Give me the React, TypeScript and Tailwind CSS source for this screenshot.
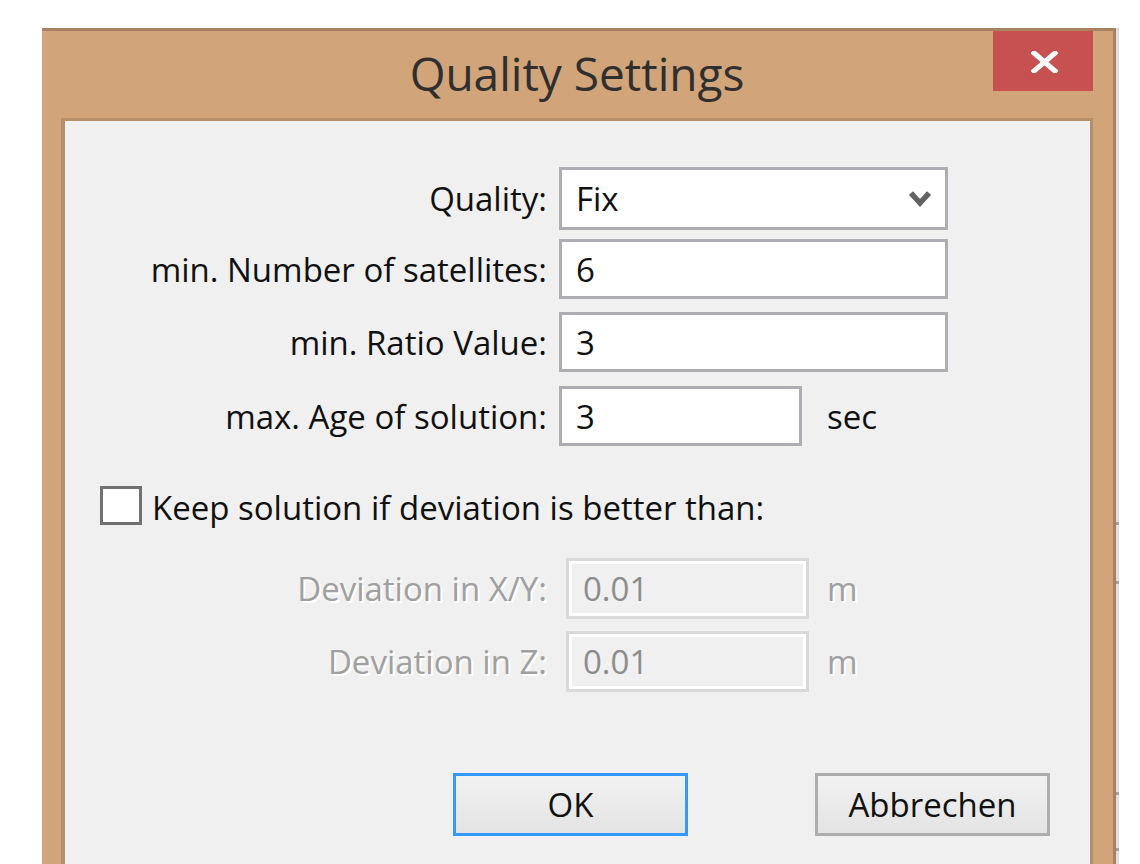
import type { ReactNode } from "react";

function CloseGlyph() {
  return (
    <svg width="27" height="22" viewBox="0 0 27 22" aria-hidden="true">
      <path d="M3 2 L24 20 M24 2 L3 20" stroke="#fff" strokeWidth="5" strokeLinecap="square" />
    </svg>
  );
}

function Chevron() {
  return (
    <svg width="22" height="18" viewBox="0 0 22 18" aria-hidden="true">
      <path d="M2 3 L11 13 L20 3" fill="none" stroke="#626262" strokeWidth="5.5" />
    </svg>
  );
}

function Label({ children, disabled }: { children: ReactNode; disabled?: boolean }) {
  return (
    <span
      className={
        disabled
          ? "w-[482px] shrink-0 text-right text-[#a0a0a0] [text-shadow:2px_2px_0_#fff]"
          : "w-[482px] shrink-0 text-right text-[#111]"
      }
    >
      {children}
    </span>
  );
}

function TextBox({ value, wide }: { value: string; wide?: boolean }) {
  return (
    <input
      readOnly
      value={value}
      className={
        (wide ? "w-[389px] " : "w-[243px] ") +
        "ml-[12px] h-[60px] border-[3px] border-[#adadb3] bg-white px-[14px] text-[#111] outline-none"
      }
    />
  );
}

function DisabledBox({ value }: { value: string }) {
  return (
    <div className="ml-[19px] flex h-[61px] w-[243px] items-center border-[3px] border-[#d9d9d9] bg-[#f0f0f0] px-[14px] text-[#8c8c8c] shadow-[inset_0_0_0_3px_#fff]">
      {value}
    </div>
  );
}

function Button({ children, focused, className }: { children: ReactNode; focused?: boolean; className?: string }) {
  return (
    <button
      className={
        (focused ? "border-[#3399ff] " : "border-[#adadad] ") +
        "flex h-[63px] w-[235px] items-center justify-center border-[3px] bg-linear-to-b from-[#f2f2f2] to-[#e3e3e3] text-[#111] " +
        (className ?? "")
      }
    >
      {children}
    </button>
  );
}

export default function App() {
  return (
    <div className="flex h-[864px] w-[1140px] overflow-hidden bg-white pl-[42px] pt-[28px] font-['Open_Sans',sans-serif] text-[33px] leading-[45px]">
      <div className="relative flex h-[836px] w-[1074px] shrink-0 flex-col border-r-[3px] border-t-[3px] border-[#a98261] bg-[#d1a479] pl-[19px] pr-[20px]">
        <div className="flex h-[87px] shrink-0 items-center justify-center pb-[3px]">
          <h1 className="text-[46px] leading-none text-[#2f2f2f]">Quality Settings</h1>
        </div>
        <button className="absolute right-[20px] top-0 flex h-[60px] w-[100px] items-center justify-center bg-[#c75050] pl-[3px] pt-[2px]">
          <CloseGlyph />
        </button>

        <div className="flex flex-1 flex-col border-l-4 border-r-[3px] border-t-[3px] border-[#b48f6a] bg-[#f0f0f0]">
          <div className="mt-[46px] flex items-center">
            <Label>Quality:</Label>
            <div className="ml-[12px] flex h-[63px] w-[389px] items-center justify-between border-[3px] border-[#adadb3] bg-white px-[14px] text-[#111]">
              <span>Fix</span>
              <Chevron />
            </div>
          </div>
          <div className="mt-[9px] flex items-center">
            <Label>min. Number of satellites:</Label>
            <TextBox value="6" wide />
          </div>
          <div className="mt-[13px] flex items-center">
            <Label>min. Ratio Value:</Label>
            <TextBox value="3" wide />
          </div>
          <div className="mt-[14px] flex items-center">
            <Label>max. Age of solution:</Label>
            <TextBox value="3" />
            <span className="ml-[25px] text-[#111]">sec</span>
          </div>

          <label className="ml-[35px] mt-[40px] flex h-[39px] items-center">
            <span className="h-[39px] w-[42px] shrink-0 border-[3px] border-[#707070] bg-white" />
            <span className="ml-[10px] pt-[3px] text-[#111]">Keep solution if deviation is better than:</span>
          </label>

          <div className="mt-[33px] flex items-center">
            <Label disabled>Deviation in X/Y:</Label>
            <DisabledBox value="0.01" />
            <span className="ml-[18px] text-[#a0a0a0] [text-shadow:2px_2px_0_#fff]">m</span>
          </div>
          <div className="mt-[12px] flex items-center">
            <Label disabled>Deviation in Z:</Label>
            <DisabledBox value="0.01" />
            <span className="ml-[18px] text-[#a0a0a0] [text-shadow:2px_2px_0_#fff]">m</span>
          </div>

          <div className="mt-[81px] flex">
            <Button focused className="ml-[388px]">
              OK
            </Button>
            <Button className="ml-[127px]">Abbrechen</Button>
          </div>
        </div>
      </div>

      {/* edge of whatever sits behind the dialog */}
      <div className="flex h-[836px] w-[3px] shrink-0 flex-col bg-[#dedede]">
        <span className="mt-[494px] h-[3px] bg-[#a0a0a8]" />
        <span className="mt-[56px] h-[3px] bg-[#a0a0a8]" />
        <span className="mt-[208px] h-[3px] bg-[#a0a0a8]" />
        <span className="mt-[53px] h-[3px] bg-[#a0a0a8]" />
      </div>
    </div>
  );
}
